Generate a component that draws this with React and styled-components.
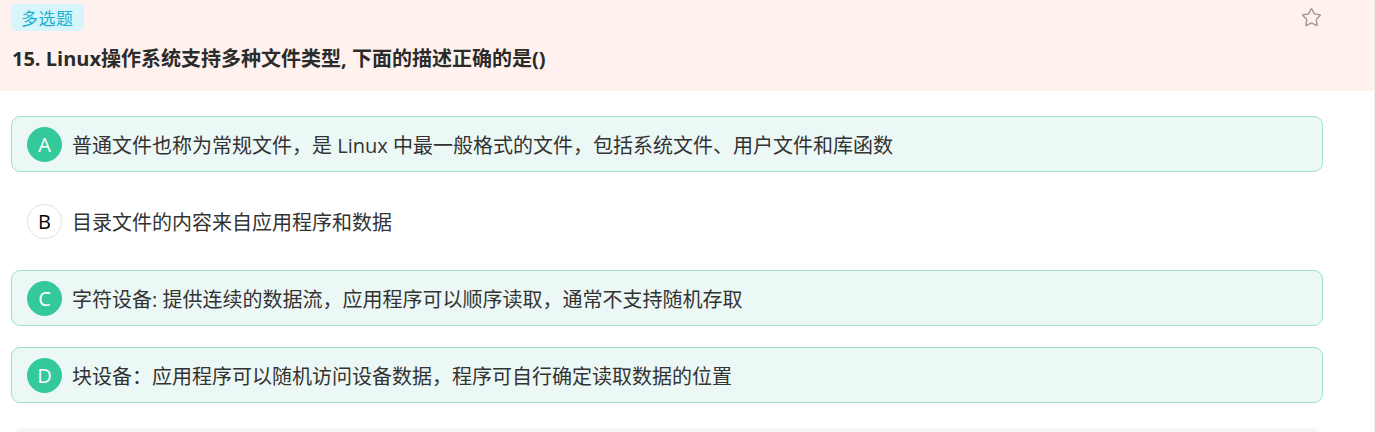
import React from "react";
import styled, { createGlobalStyle } from "styled-components";
import { Star } from "lucide-react";

const GlobalStyle = createGlobalStyle`
  html, body {
    margin: 0;
    padding: 0;
    background: #ffffff;
  }
  body {
    font-family: "Open Sans", "Noto Sans CJK SC", sans-serif;
    color: #333333;
  }
`;

const Page = styled.div`
  width: 1374px;
  min-height: 432px;
  border-right: 1px solid #efefef;
  box-sizing: content-box;
`;

const Header = styled.div`
  display: flex;
  justify-content: space-between;
  align-items: flex-start;
  height: 91px;
  box-sizing: border-box;
  padding: 4px 52px 0 11px;
  background-color: #fff2ee;
`;

const HeaderMain = styled.div`
  display: flex;
  flex-direction: column;
  align-items: flex-start;
`;

const Tag = styled.span`
  display: inline-flex;
  align-items: center;
  height: 27px;
  padding: 0 10px;
  border-radius: 5px;
  background-color: #d6f6fc;
  color: #1cb2d2;
  font-size: 17px;
  letter-spacing: 0.5px;
`;

const Title = styled.h2`
  margin: 14px 0 0 1px;
  font-size: 20px;
  line-height: 28px;
  font-weight: 700;
  color: #2b2b2b;
`;

const StarButton = styled.div`
  margin-top: 3px;
  color: #9a9a9a;
  display: flex;
`;

const Options = styled.div`
  display: flex;
  flex-direction: column;
  gap: 21px;
  padding: 25px 0 0 11px;
  width: 1312px;
`;

const Option = styled.div`
  display: flex;
  align-items: center;
  height: 56px;
  box-sizing: border-box;
  padding: 0 15px;
  border-radius: 9px;
  border: 1px solid ${(p) => (p.$selected ? "#9ee2c9" : "transparent")};
  background-color: ${(p) => (p.$selected ? "#ecf8f5" : "transparent")};
`;

const Letter = styled.span`
  flex: none;
  display: flex;
  align-items: center;
  justify-content: center;
  width: 35px;
  height: 35px;
  box-sizing: border-box;
  border-radius: 50%;
  font-size: 20px;
  background-color: ${(p) => (p.$selected ? "#34c99b" : "#ffffff")};
  color: ${(p) => (p.$selected ? "#ffffff" : "#000000")};
  border: 1px solid ${(p) => (p.$selected ? "#34c99b" : "#e2e2e2")};
`;

const OptionText = styled.span`
  margin-left: 10px;
  font-size: 20px;
  color: #333333;
`;

const NextCard = styled.div`
  margin: 25px 0 0 14px;
  width: 1306px;
  height: 20px;
  border-radius: 8px;
  background-color: #f6f6f6;
`;

const options = [
  {
    key: "A",
    text: "普通文件也称为常规文件，是 Linux 中最一般格式的文件，包括系统文件、用户文件和库函数",
    selected: true,
  },
  { key: "B", text: "目录文件的内容来自应用程序和数据", selected: false },
  {
    key: "C",
    text: "字符设备: 提供连续的数据流，应用程序可以顺序读取，通常不支持随机存取",
    selected: true,
  },
  {
    key: "D",
    text: "块设备：应用程序可以随机访问设备数据，程序可自行确定读取数据的位置",
    selected: true,
  },
];

export default function App() {
  return (
    <Page>
      <GlobalStyle />
      <Header>
        <HeaderMain>
          <Tag>多选题</Tag>
          <Title>15. Linux操作系统支持多种文件类型, 下面的描述正确的是()</Title>
        </HeaderMain>
        <StarButton>
          <Star size={21} strokeWidth={1.6} />
        </StarButton>
      </Header>
      <Options>
        {options.map((o) => (
          <Option key={o.key} $selected={o.selected}>
            <Letter $selected={o.selected}>{o.key}</Letter>
            <OptionText>{o.text}</OptionText>
          </Option>
        ))}
      </Options>
      <NextCard />
    </Page>
  );
}
